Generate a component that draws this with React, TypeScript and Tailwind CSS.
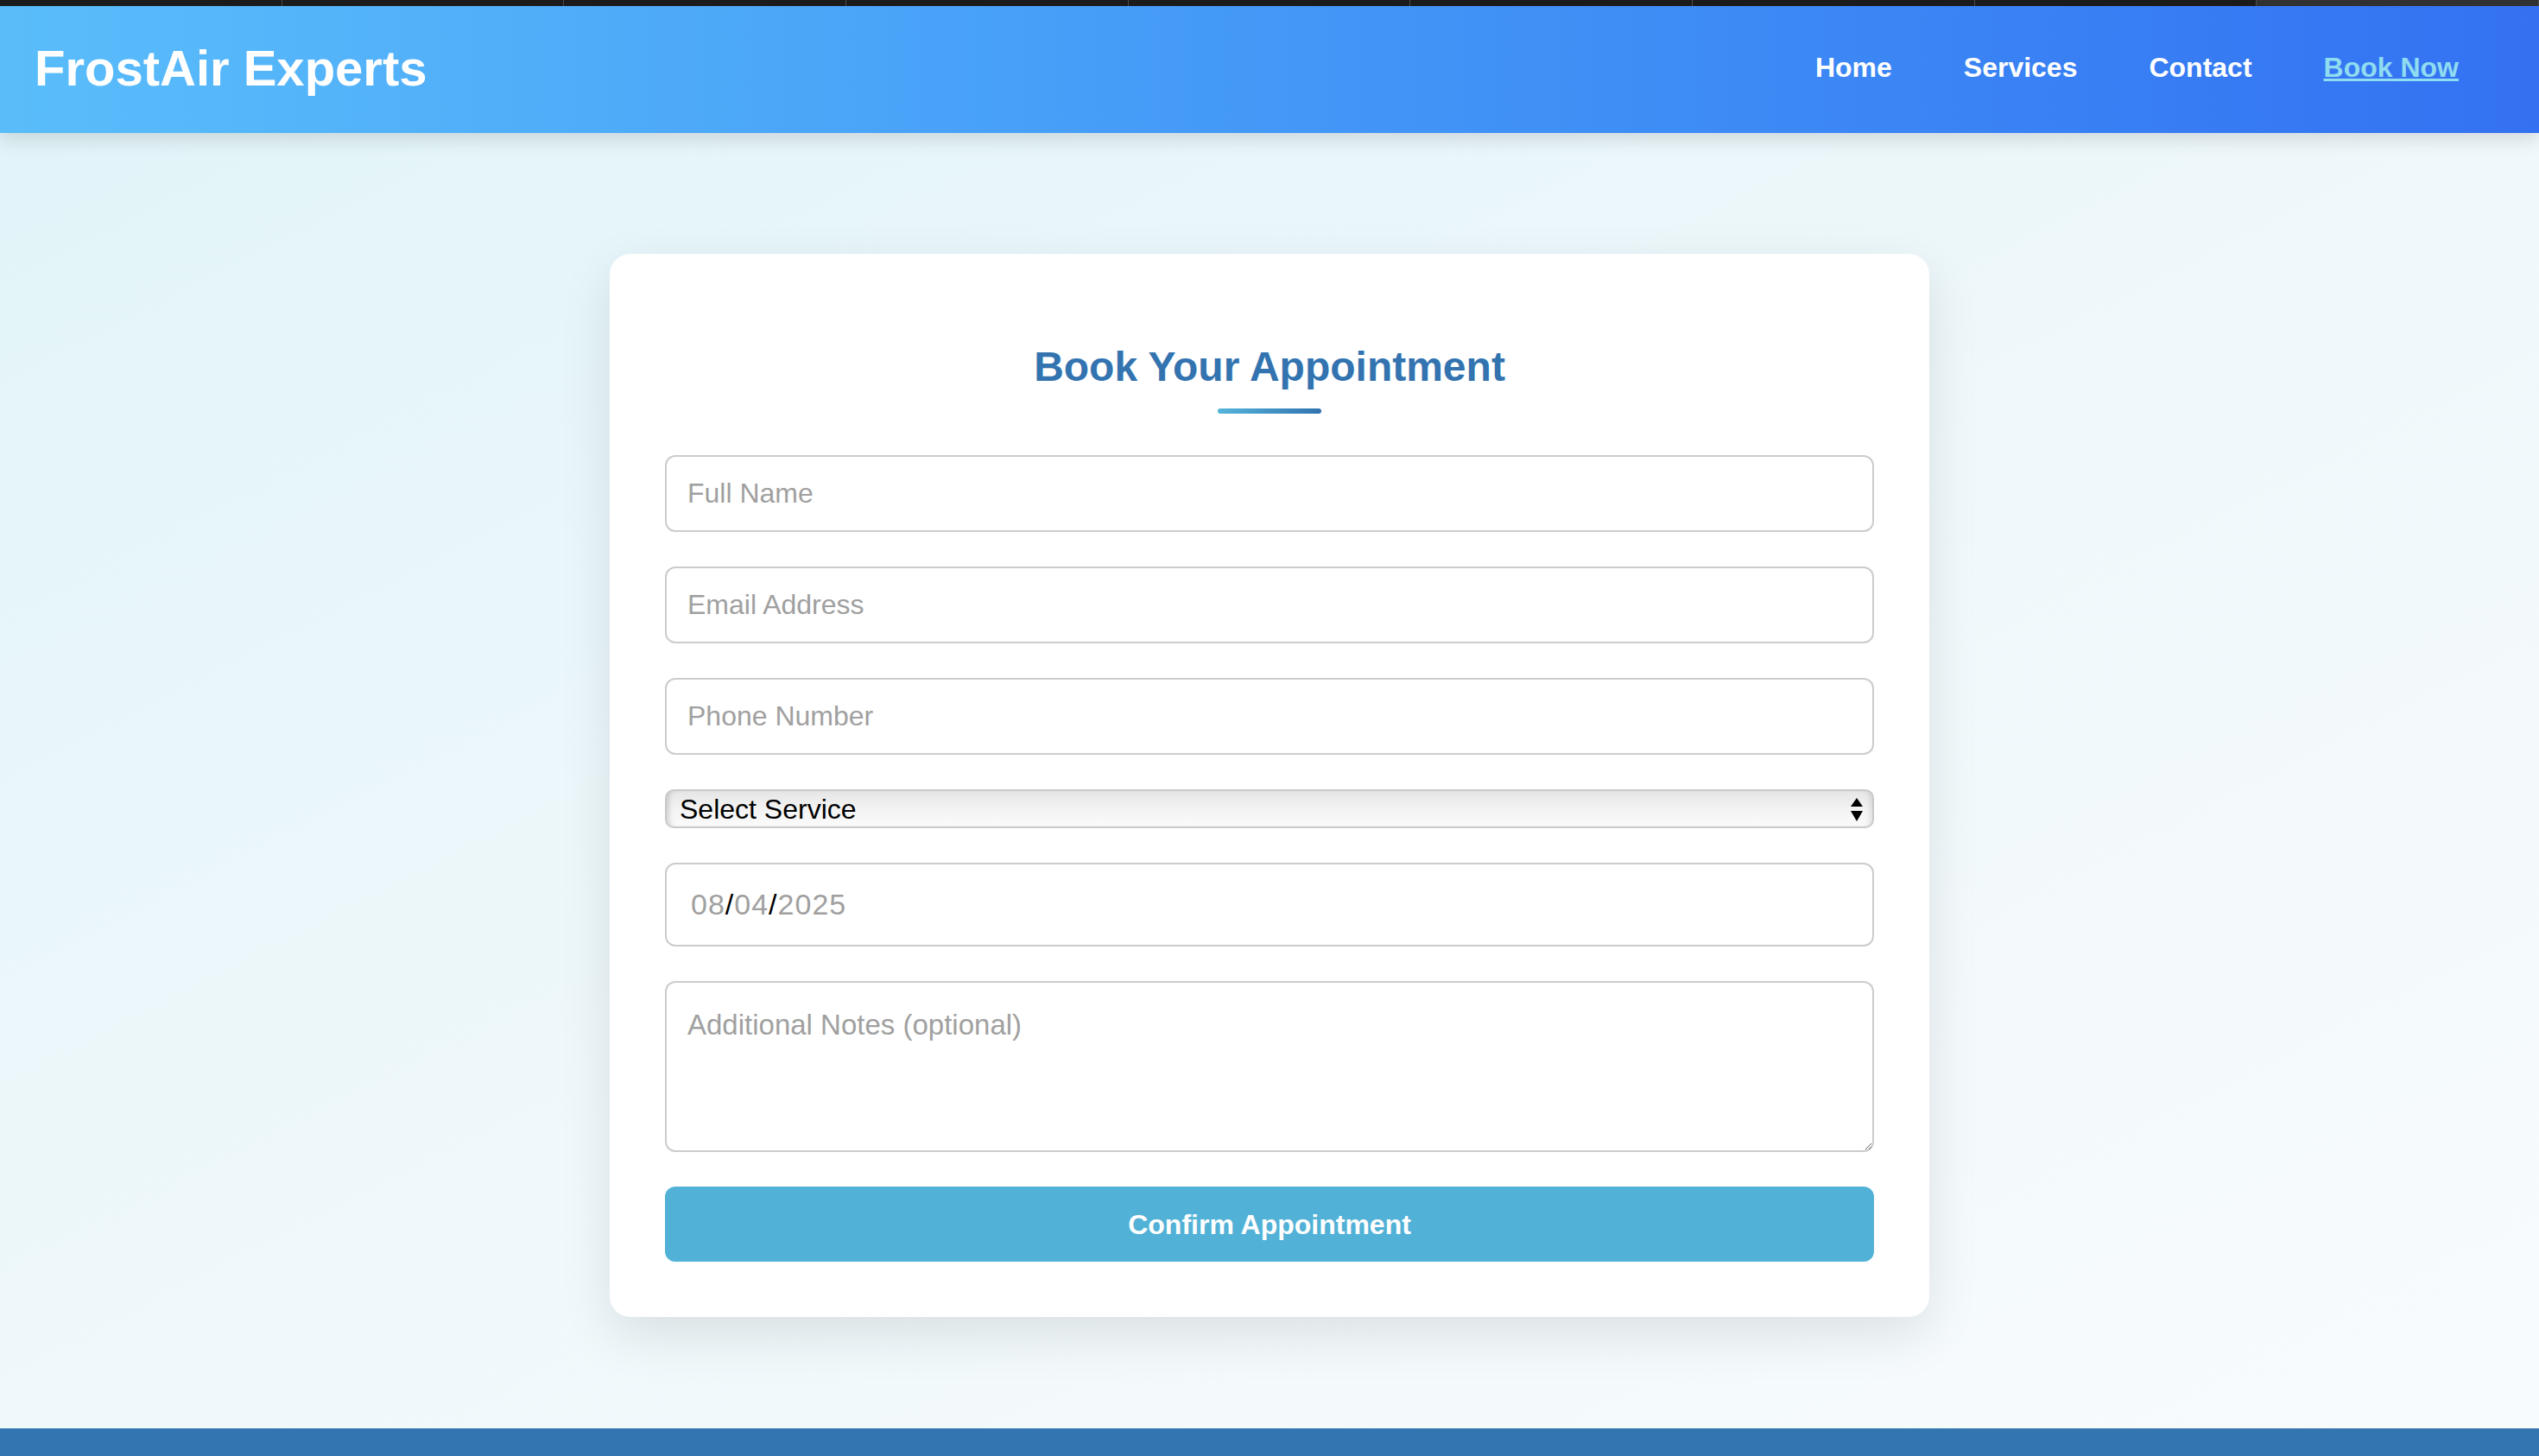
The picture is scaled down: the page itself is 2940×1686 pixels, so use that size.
import { useState } from "react";

const tabs = [0, 1, 2, 3, 4, 5, 6, 7, 8];

export default function App() {
  const [service, setService] = useState("");

  return (
    <div className="min-h-screen bg-white font-['Liberation_Sans',Arial,sans-serif] text-black">
      {/* Window strip above the page */}
      <div className="flex h-[7px] bg-[#1c1c1c]">
        {tabs.map((t) => (
          <div
            key={t}
            className={`flex-1 border-r border-[#4d4d4d] ${t === 8 ? "bg-[#323232]" : ""}`}
          />
        ))}
      </div>

      {/* Header */}
      <header className="relative z-10 flex h-[147px] items-center justify-between bg-gradient-to-r from-[#5abdfa] to-[#3471f2] pb-[5px] pl-[40px] pr-[93px] shadow-[0_8px_20px_rgba(0,0,0,0.12)]">
        <h1 className="text-[58px] font-bold leading-normal text-white">FrostAir Experts</h1>
        <nav className="flex items-center gap-[83px] text-[32px] font-bold text-white">
          <a href="#">Home</a>
          <a href="#">Services</a>
          <a href="#">Contact</a>
          <a href="#" className="text-[#8fdcf1] underline decoration-[3px]">
            Book Now
          </a>
        </nav>
      </header>

      {/* Main */}
      <main className="flex justify-center bg-gradient-to-br from-[#e2f4f9] via-[#eff8fb] to-[#f8fbfd] pb-[129px] pt-[140px]">
        <div className="w-[1528px] rounded-[24px] bg-white px-[64px] pb-[64px] pt-[64px] shadow-[0_20px_60px_rgba(0,0,0,0.1)]">
          <h2 className="mt-[31px] text-center text-[48px] font-bold leading-normal text-[#3273b0]">
            Book Your Appointment
          </h2>
          <div className="mx-auto mt-[12px] h-[6px] w-[120px] rounded-full bg-gradient-to-r from-[#56b5da] to-[#3273b0]" />

          <form className="mt-[48px] flex flex-col gap-[40px]" onSubmit={(e) => e.preventDefault()}>
            <input
              type="text"
              placeholder="Full Name"
              className="h-[89px] w-full rounded-[12px] border-2 border-[#cccccc] px-[24px] text-[32px] outline-none placeholder:text-[#a0a0a0]"
            />
            <input
              type="email"
              placeholder="Email Address"
              className="h-[89px] w-full rounded-[12px] border-2 border-[#cccccc] px-[24px] text-[32px] outline-none placeholder:text-[#a0a0a0]"
            />
            <input
              type="tel"
              placeholder="Phone Number"
              className="h-[89px] w-full rounded-[12px] border-2 border-[#cccccc] px-[24px] text-[32px] outline-none placeholder:text-[#a0a0a0]"
            />

            {/* Select, drawn like the mac native control */}
            <div className="relative">
              <select
                value={service}
                onChange={(e) => setService(e.target.value)}
                className="h-[45px] w-full appearance-none rounded-[10px] border-2 border-[#c9c9c9] bg-gradient-to-b from-[#e6e6e6] via-[#f3f3f3] to-[#fafafa] pl-[15px] text-[32px] leading-none text-black shadow-[inset_6px_0_6px_-4px_rgba(0,0,0,0.18),inset_-6px_0_6px_-4px_rgba(0,0,0,0.12)] outline-none"
              >
                <option value="">Select Service</option>
                <option value="install">AC Installation</option>
                <option value="repair">AC Repair</option>
                <option value="maintenance">Maintenance</option>
              </select>
              <svg
                className="pointer-events-none absolute right-[13px] top-[10px]"
                width="14"
                height="27"
                viewBox="0 0 14 27"
              >
                <path d="M7 0 L14 10 L0 10 Z" fill="#000" />
                <path d="M0 15 L14 15 L7 27 Z" fill="#000" />
              </svg>
            </div>

            {/* Date field */}
            <div className="flex h-[97px] w-full items-center rounded-[12px] border-2 border-[#cccccc] px-[28px] text-[34px] tracking-[1px]">
              <span className="text-[#a0a0a0]">08</span>
              <span className="text-black">/</span>
              <span className="text-[#a0a0a0]">04</span>
              <span className="text-black">/</span>
              <span className="text-[#a0a0a0]">2025</span>
            </div>

            <textarea
              placeholder="Additional Notes (optional)"
              className="block h-[198px] w-full rounded-[12px] border-2 border-[#cccccc] p-[24px] text-[33px] outline-none placeholder:text-[#a0a0a0]"
            />

            <button
              type="submit"
              className="h-[87px] w-full rounded-[12px] bg-[#52b1d6] text-[32px] font-bold text-white"
            >
              Confirm Appointment
            </button>
          </form>
        </div>
      </main>

      {/* Footer */}
      <footer className="h-[120px] bg-[#3375b0]" />
    </div>
  );
}
